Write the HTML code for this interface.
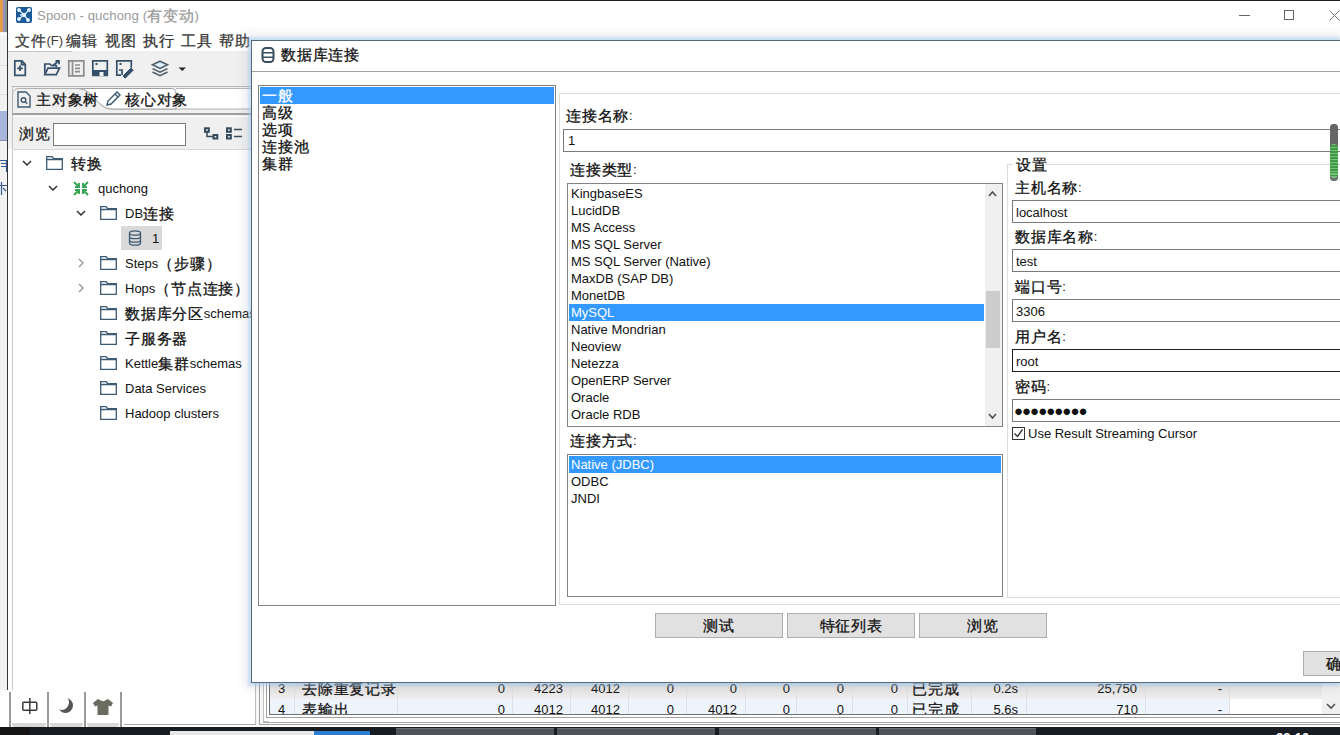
<!DOCTYPE html>
<html><head><meta charset="utf-8">
<style>
*{box-sizing:border-box;margin:0;padding:0}
html,body{width:1340px;height:735px;overflow:hidden;background:#fff;font-family:"Liberation Sans",sans-serif;font-size:13px;color:#000}
.a{position:absolute}
.t{position:absolute;white-space:nowrap;line-height:1}
.c{font-size:1.154em;line-height:0;vertical-align:-1px;letter-spacing:0.75px;-webkit-text-stroke:0.3px currentColor}
</style></head><body>
<!-- background window strip -->
<div class="a" style="left:0;top:0;width:8px;height:735px;background:#f2f2f2"></div>
<div class="a" style="left:0;top:0;width:7px;height:32px;background:linear-gradient(to right,#e6a040 0,#e6a040 2px,#a08cc0 3.5px,#8e9aa0 5px,#7f8f80 7px)"></div>
<div class="a" style="left:0;top:34px;width:7px;height:1px;background:#fff"></div>
<div class="a" style="left:0;top:65px;width:7px;height:1px;background:#dcdcdc"></div>
<div class="a" style="left:0;top:94px;width:7px;height:1px;background:#dcdcdc"></div>
<div class="a" style="left:0;top:111px;width:7px;height:29px;background:#aab5dc"></div>
<div class="a" style="left:0;top:140px;width:7px;height:1px;background:#8890a8"></div>
<svg class="a" style="left:0;top:155px" width="7" height="40" viewBox="0 0 7 40" fill="none" stroke="#3b5a9a" stroke-width="1.2"><path d="M0 5.5h7M1 8.5h6M1 11.5h6M6.5 5v12M0 30.5h7M1.5 27v13M3 33l3 3"/></svg>

<!-- main window -->
<div class="a" id="main" style="left:7px;top:0;width:1333px;height:735px;background:#fff;border-left:1px solid #333;border-top:1px solid #222"></div>
<!-- title bar -->
<svg class="a" style="left:16px;top:7px" width="16" height="16" viewBox="0 0 16 16"><rect width="16" height="16" rx="2" fill="#1a5a96"/><g stroke="#d8ecff" stroke-width="1.3" fill="#fff"><path d="M3 3l5 5M13 3L8 8M3 12l5-4M12 13L8 8M8 8h-4"/><circle cx="3" cy="3" r="1.3"/><circle cx="13" cy="3" r="1.3"/><circle cx="3" cy="12" r="1.3"/><circle cx="12" cy="13" r="1.3"/><circle cx="8" cy="8" r="1.6"/></g></svg>
<div class="t" style="left:37px;top:9px;font-size:13.2px;color:#9a9a9a;letter-spacing:0.1px">Spoon - quchong (<span class="c">有变动</span>)</div>
<!-- window controls -->
<div class="a" style="left:1239px;top:15px;width:11px;height:1px;background:#666"></div>
<div class="a" style="left:1284px;top:10px;width:10px;height:10px;border:1px solid #666"></div>
<svg class="a" style="left:1329px;top:10px" width="11" height="11" viewBox="0 0 11 11" stroke="#777" stroke-width="1"><path d="M0.5 0.5l10 10M10.5 0.5l-10 10"/></svg>

<!-- menu bar -->
<div class="t" style="left:15px;top:34px;color:#3a3a3a"><span class="c">文件</span>(F)</div>
<div class="t" style="left:66px;top:34px;color:#3a3a3a"><span class="c">编辑</span></div>
<div class="t" style="left:105px;top:34px;color:#3a3a3a"><span class="c">视图</span></div>
<div class="t" style="left:143px;top:34px;color:#3a3a3a"><span class="c">执行</span></div>
<div class="t" style="left:181px;top:34px;color:#3a3a3a"><span class="c">工具</span></div>
<div class="t" style="left:219px;top:34px;color:#3a3a3a"><span class="c">帮助</span></div>

<!-- toolbar bg -->
<div class="a" style="left:8px;top:51px;width:243px;height:98px;background:#f0f0f0"></div>


<!-- toolbar icons -->
<div class="a" style="left:8px;top:51px;width:64px;height:1px;background:#c8c8c8"></div>
<svg class="a" style="left:0;top:50px" width="200" height="36" viewBox="0 50 200 36" fill="none" stroke="#34506a" stroke-width="1.7">
 <path d="M14.8 60.8h7l3.5 3.5v11H14.8z M21.5 60.8v3.8h3.8"/><path d="M20 65.5v5.5M17.2 68.3h5.6" stroke-width="1.8"/>
 <path d="M44.8 73.5V64h5l1.5 1.5h5v2" /><path d="M44.8 74.7h11.5l3.2-6.5H48z" /><path d="M52.5 66l6-5M55.5 60.8h3.5v3.5"/>
 <path d="M68.8 60.8h15v15h-15z M72.5 60.8v15 M75 65h5M75 68.3h5M75 71.6h5" stroke="#8c8c8c"/>
 <path d="M92.8 60.8h14.5v14.5H92.8z" /><rect x="93" y="70" width="14" height="6" fill="#34506a" stroke="none"/><rect x="99.5" y="72" width="4" height="4" fill="#f0f0f0" stroke="none"/><rect x="95.5" y="63" width="2" height="2" fill="#34506a" stroke="none"/>
 <path d="M121 75.2h-4.2V60.8h14.5v7" /><rect x="119.5" y="63" width="2" height="2" fill="#34506a" stroke="none"/><path d="M119 70h3v5" /><path d="M123 76l8-8 2.2 2.2-8 8z" fill="#34506a" stroke-width="1"/>
 <path d="M160 61.2l7.5 3.6-7.5 3.6-7.5-3.6z" fill="#dff0fa" stroke="#4d5e6a" stroke-width="1.6"/><path d="M152.5 68.6l7.5 3.6 7.5-3.6 M152.5 72l7.5 3.6 7.5-3.6" stroke="#4d5e6a" stroke-width="1.6"/>
 <path d="M178.5 67.5h7.5l-3.75 3.5z" fill="#222" stroke="none"/>
</svg>
<!-- tab folder frame -->
<div class="a" style="left:12px;top:86px;width:239px;height:63px;background:#f0f0f0;border-left:1px solid #c8c8c8"></div>
<div class="a" style="left:12px;top:86px;width:239px;height:1px;background:#b8b8b8"></div>
<svg class="a" style="left:12px;top:86px" width="239" height="30" viewBox="0 0 239 30">
 <path d="M164 2.5 H239 V23 H164 Z" fill="#fff"/>
 <path d="M0.5 28 V9 Q0.5 2.5 7 2.5 H67 C80 2.5 86 23 99 23 H239" fill="#f0f0f0" stroke="#b0b0b0"/>
 <path d="M67 2.5 H159 Q164 2.5 164 8 V23 H99 C86 23 80 2.5 67 2.5 Z" fill="#fff" stroke="#a0a0a0"/>
 <path d="M164 2.5 H239" stroke="#b8b8b8"/>
 <path d="M0 28 H239" stroke="#a0a0a0" stroke-width="2"/>
</svg>
<!-- tab icons/text -->
<svg class="a" style="left:17px;top:91px" width="14" height="17" viewBox="0 0 14 17" fill="none" stroke="#3d5a73" stroke-width="1.4"><path d="M1 1h8l4 4v11H1z"/><circle cx="6.5" cy="9" r="2.3"/><path d="M8.2 10.7l2 2"/></svg>
<div class="t" style="left:36px;top:93px;color:#111"><span class="c">主对象树</span></div>
<svg class="a" style="left:105px;top:91px" width="16" height="16" viewBox="0 0 16 16" fill="none" stroke="#3d5a73" stroke-width="1.4"><path d="M2 14l1-4 9-9 3 3-9 9z M10 3l3 3"/></svg>
<div class="t" style="left:125px;top:93px;color:#111"><span class="c">核心对象</span></div>

<!-- browse row -->
<div class="t" style="left:19px;top:127px;color:#222"><span class="c">浏览</span></div>
<div class="a" style="left:53px;top:123px;width:133px;height:23px;background:#fff;border:1px solid #7a7a7a"></div>
<div class="a" style="left:13px;top:116px;width:238px;height:1px;background:#fff"></div>
<svg class="a" style="left:200px;top:120px" width="50" height="24" viewBox="200 120 50 24" fill="none" stroke="#34495a" stroke-width="2">
 <rect x="205" y="128.3" width="3.8" height="3.5"/><rect x="213.5" y="135" width="3.8" height="3.5"/><path d="M207 132v4.5h6.5" stroke-width="1.5"/>
 <rect x="227" y="128.3" width="3.8" height="3.5"/><rect x="227" y="135" width="3.8" height="3.5"/><path d="M234 129.5h8M234 136.5h8" stroke-width="1.5"/>
</svg>
<!-- tree area -->
<div class="a" style="left:12px;top:149px;width:244px;height:576px;background:#fff;border-left:1px solid #c8c8c8;border-top:1px solid #d8d8d8;border-right:1px solid #bdbdbd;border-bottom:1px solid #a8a8a8"></div>

<!-- tree -->
<svg class="a" style="left:22px;top:160px" width="10" height="6" viewBox="0 0 10 6" fill="none" stroke="#333" stroke-width="1.5"><path d="M1 1l4 4 4-4"/></svg>
<svg class="a" style="left:46px;top:156px" width="17" height="14" viewBox="0 0 17 14" fill="none" stroke="#3d5a73" stroke-width="1.3"><path d="M0.7 0.7h5.5l1.5 2h8.6v10.6H0.7z M0.7 3.5h16"/></svg>
<div class="t" style="left:71px;top:157px;color:#111"><span class="c">转换</span></div>
<svg class="a" style="left:48px;top:185px" width="10" height="6" viewBox="0 0 10 6" fill="none" stroke="#333" stroke-width="1.5"><path d="M1 1l4 4 4-4"/></svg>
<svg class="a" style="left:73px;top:181px" width="16" height="15" viewBox="0 0 16 15" fill="none" stroke="#3aa655" stroke-width="2"><path d="M1 1l5 5M6 2v4H2 M15 1l-5 5M10 2v4h4 M1 14l5-5M6 13V9H2 M15 14l-5-5M10 13V9h4"/></svg>
<div class="t" style="left:98px;top:182px;color:#111">quchong</div>
<svg class="a" style="left:76px;top:210px" width="10" height="6" viewBox="0 0 10 6" fill="none" stroke="#333" stroke-width="1.5"><path d="M1 1l4 4 4-4"/></svg>
<svg class="a" style="left:100px;top:206px" width="17" height="14" viewBox="0 0 17 14" fill="none" stroke="#3d5a73" stroke-width="1.3"><path d="M0.7 0.7h5.5l1.5 2h8.6v10.6H0.7z M0.7 3.5h16"/></svg>
<div class="t" style="left:125px;top:207px;color:#111">DB<span class="c">连接</span></div>
<div class="a" style="left:121px;top:226px;width:41px;height:24px;background:#d9d9d9"></div>
<svg class="a" style="left:128px;top:230px" width="14" height="16" viewBox="0 0 14 16" fill="none" stroke="#3d5a73" stroke-width="1.3"><ellipse cx="7" cy="3" rx="5.5" ry="2.2"/><path d="M1.5 3v10c0 1.3 2.5 2.2 5.5 2.2s5.5-.9 5.5-2.2V3 M1.5 6.5c0 1.3 2.5 2.2 5.5 2.2s5.5-.9 5.5-2.2 M1.5 10c0 1.3 2.5 2.2 5.5 2.2s5.5-.9 5.5-2.2"/></svg>
<div class="t" style="left:152px;top:232px;color:#111">1</div>
<svg class="a" style="left:78px;top:258px" width="6" height="10" viewBox="0 0 6 10" fill="none" stroke="#999" stroke-width="1.4"><path d="M1 1l4 4-4 4"/></svg>
<svg class="a" style="left:100px;top:256px" width="17" height="14" viewBox="0 0 17 14" fill="none" stroke="#3d5a73" stroke-width="1.3"><path d="M0.7 0.7h5.5l1.5 2h8.6v10.6H0.7z M0.7 3.5h16"/></svg>
<div class="t" style="left:125px;top:257px;color:#111">Steps<span class="c">（步骤）</span></div>
<svg class="a" style="left:78px;top:283px" width="6" height="10" viewBox="0 0 6 10" fill="none" stroke="#999" stroke-width="1.4"><path d="M1 1l4 4-4 4"/></svg>
<svg class="a" style="left:100px;top:281px" width="17" height="14" viewBox="0 0 17 14" fill="none" stroke="#3d5a73" stroke-width="1.3"><path d="M0.7 0.7h5.5l1.5 2h8.6v10.6H0.7z M0.7 3.5h16"/></svg>
<div class="t" style="left:125px;top:282px;color:#111">Hops<span class="c">（节点连接）</span></div>
<svg class="a" style="left:100px;top:306px" width="17" height="14" viewBox="0 0 17 14" fill="none" stroke="#3d5a73" stroke-width="1.3"><path d="M0.7 0.7h5.5l1.5 2h8.6v10.6H0.7z M0.7 3.5h16"/></svg>
<div class="t" style="left:125px;top:307px;color:#111"><span class="c">数据库分区</span>schemas</div>
<svg class="a" style="left:100px;top:331px" width="17" height="14" viewBox="0 0 17 14" fill="none" stroke="#3d5a73" stroke-width="1.3"><path d="M0.7 0.7h5.5l1.5 2h8.6v10.6H0.7z M0.7 3.5h16"/></svg>
<div class="t" style="left:125px;top:332px;color:#111"><span class="c">子服务器</span></div>
<svg class="a" style="left:100px;top:356px" width="17" height="14" viewBox="0 0 17 14" fill="none" stroke="#3d5a73" stroke-width="1.3"><path d="M0.7 0.7h5.5l1.5 2h8.6v10.6H0.7z M0.7 3.5h16"/></svg>
<div class="t" style="left:125px;top:357px;color:#111">Kettle<span class="c">集群</span>schemas</div>
<svg class="a" style="left:100px;top:381px" width="17" height="14" viewBox="0 0 17 14" fill="none" stroke="#3d5a73" stroke-width="1.3"><path d="M0.7 0.7h5.5l1.5 2h8.6v10.6H0.7z M0.7 3.5h16"/></svg>
<div class="t" style="left:125px;top:382px;color:#111">Data Services</div>
<svg class="a" style="left:100px;top:406px" width="17" height="14" viewBox="0 0 17 14" fill="none" stroke="#3d5a73" stroke-width="1.3"><path d="M0.7 0.7h5.5l1.5 2h8.6v10.6H0.7z M0.7 3.5h16"/></svg>
<div class="t" style="left:125px;top:407px;color:#111">Hadoop clusters</div>

<!-- bottom -->
<div class="a" style="left:256px;top:640px;width:1084px;height:87px;background:#f7f7f7"></div>
<div class="a" style="left:259px;top:640px;width:1081px;height:85px;border-left:1px solid #a0a0a0;border-bottom:1px solid #a0a0a0"></div>
<div class="a" style="left:263px;top:640px;width:1077px;height:82px;border-left:1px solid #c0c0c0;border-bottom:1px solid #c0c0c0;background:#fff"></div>
<div class="a" style="left:266px;top:640px;width:1074px;height:78px;border-left:1px solid #a0a0a0;border-bottom:1px solid #a0a0a0"></div>
<div class="a" style="left:269px;top:640px;width:1071px;height:75px;border-left:1px solid #707070;border-bottom:1px solid #707070;background:#fff"></div>
<div class="a" style="left:270px;top:683px;width:1060px;height:16px;background:linear-gradient(#d6dde2,#e6e4e2 25%,#eeeeee)"></div>
<div class="a" style="left:270px;top:699px;width:960px;height:15px;background:#eef4fb"></div>
<div class="a" style="left:294px;top:683px;width:1px;height:31px;background:#e0e0e0"></div>
<div class="a" style="left:397px;top:683px;width:1px;height:31px;background:#e0e0e0"></div>
<div class="a" style="left:512px;top:683px;width:1px;height:31px;background:#e0e0e0"></div>
<div class="a" style="left:570px;top:683px;width:1px;height:31px;background:#e0e0e0"></div>
<div class="a" style="left:628px;top:683px;width:1px;height:31px;background:#e0e0e0"></div>
<div class="a" style="left:686px;top:683px;width:1px;height:31px;background:#e0e0e0"></div>
<div class="a" style="left:745px;top:683px;width:1px;height:31px;background:#e0e0e0"></div>
<div class="a" style="left:796px;top:683px;width:1px;height:31px;background:#e0e0e0"></div>
<div class="a" style="left:852px;top:683px;width:1px;height:31px;background:#e0e0e0"></div>
<div class="a" style="left:907px;top:683px;width:1px;height:31px;background:#e0e0e0"></div>
<div class="a" style="left:971px;top:683px;width:1px;height:31px;background:#e0e0e0"></div>
<div class="a" style="left:1026px;top:683px;width:1px;height:31px;background:#e0e0e0"></div>
<div class="a" style="left:1145px;top:683px;width:1px;height:31px;background:#e0e0e0"></div>
<div class="a" style="left:1229px;top:683px;width:1px;height:31px;background:#e0e0e0"></div>
<div class="a" style="left:1322px;top:683px;width:18px;height:31px;background:#f0f0f0"></div>
<svg class="a" style="left:1326px;top:703px" width="10" height="7" viewBox="0 0 10 7" fill="none" stroke="#505050" stroke-width="1.6"><path d="M1 1l4 4 4-4"/></svg>
<div class="t" style="left:278px;top:682px;color:#111">3</div>
<div class="t" style="left:302px;top:682px;color:#111"><span class="c">去除重复记录</span></div>
<div class="t" style="left:405px;width:100px;text-align:right;top:682px;color:#111">0</div>
<div class="t" style="left:463px;width:100px;text-align:right;top:682px;color:#111">4223</div>
<div class="t" style="left:520px;width:100px;text-align:right;top:682px;color:#111">4012</div>
<div class="t" style="left:574px;width:100px;text-align:right;top:682px;color:#111">0</div>
<div class="t" style="left:637px;width:100px;text-align:right;top:682px;color:#111">0</div>
<div class="t" style="left:690px;width:100px;text-align:right;top:682px;color:#111">0</div>
<div class="t" style="left:744px;width:100px;text-align:right;top:682px;color:#111">0</div>
<div class="t" style="left:798px;width:100px;text-align:right;top:682px;color:#111">0</div>
<div class="t" style="left:912px;top:682px;color:#111"><span class="c">已完成</span></div>
<div class="t" style="left:918px;width:100px;text-align:right;top:682px;color:#111">0.2s</div>
<div class="t" style="left:1037px;width:100px;text-align:right;top:682px;color:#111">25,750</div>
<div class="t" style="left:1122px;width:100px;text-align:right;top:682px;color:#111">-</div>
<div class="t" style="left:278px;top:703px;color:#111">4</div>
<div class="t" style="left:302px;top:703px;color:#111"><span class="c">表输出</span></div>
<div class="t" style="left:405px;width:100px;text-align:right;top:703px;color:#111">0</div>
<div class="t" style="left:463px;width:100px;text-align:right;top:703px;color:#111">4012</div>
<div class="t" style="left:520px;width:100px;text-align:right;top:703px;color:#111">4012</div>
<div class="t" style="left:574px;width:100px;text-align:right;top:703px;color:#111">0</div>
<div class="t" style="left:637px;width:100px;text-align:right;top:703px;color:#111">4012</div>
<div class="t" style="left:690px;width:100px;text-align:right;top:703px;color:#111">0</div>
<div class="t" style="left:744px;width:100px;text-align:right;top:703px;color:#111">0</div>
<div class="t" style="left:798px;width:100px;text-align:right;top:703px;color:#111">0</div>
<div class="t" style="left:912px;top:703px;color:#111"><span class="c">已完成</span></div>
<div class="t" style="left:918px;width:100px;text-align:right;top:703px;color:#111">5.6s</div>
<div class="t" style="left:1038px;width:100px;text-align:right;top:703px;color:#111">710</div>
<div class="t" style="left:1122px;width:100px;text-align:right;top:703px;color:#111">-</div>
<div class="a" style="left:269px;top:714px;width:1071px;height:13px;background:#fff;border-top:1px solid #707070"></div>
<div class="a" style="left:266px;top:717px;width:1074px;height:1px;background:#a0a0a0"></div>
<div class="a" style="left:263px;top:722px;width:1077px;height:1px;background:#a8a8a8"></div>
<div class="a" style="left:259px;top:724px;width:1081px;height:1px;background:#a0a0a0"></div>
<div class="a" style="left:0px;top:690px;width:124px;height:37px;background:#fff"></div>
<div class="a" style="left:9px;top:692px;width:2px;height:35px;background:#9a9a9a"></div>
<div class="a" style="left:47px;top:692px;width:2px;height:35px;background:#9a9a9a"></div>
<div class="a" style="left:84px;top:692px;width:2px;height:35px;background:#9a9a9a"></div>
<div class="a" style="left:120px;top:692px;width:2px;height:35px;background:#9a9a9a"></div>
<div class="a" style="left:12px;top:723px;width:34px;height:4px;background:#d8d8d8;border-radius:0 0 3px 3px"></div>
<div class="a" style="left:50px;top:723px;width:33px;height:4px;background:#d8d8d8;border-radius:0 0 3px 3px"></div>
<div class="a" style="left:87px;top:723px;width:32px;height:4px;background:#d8d8d8;border-radius:0 0 3px 3px"></div>
<svg class="a" style="left:20px;top:696px" width="20" height="20" viewBox="0 0 20 20" fill="none" stroke="#3a3a3a" stroke-width="1.5"><rect x="2.8" y="6.2" width="14" height="8" rx="1"/><path d="M9.8 2v16"/></svg>
<svg class="a" style="left:56px;top:696px" width="18" height="18" viewBox="0 0 18 18"><defs><mask id="mm"><rect width="18" height="18" fill="#fff"/><circle cx="5.5" cy="6.5" r="7.5" fill="#000"/></mask></defs><circle cx="9.5" cy="9.5" r="7.5" fill="#555" mask="url(#mm)"/></svg>
<svg class="a" style="left:92px;top:698px" width="22" height="18" viewBox="0 0 22 18"><path d="M6 1 L9 2.5 Q11 4 13 2.5 L16 1 L21 5 L19 8.5 L16.5 7.5 V17 H5.5 V7.5 L3 8.5 L1 5z" fill="#6b6b60"/></svg>
<div class="a" style="left:0;top:727px;width:1340px;height:8px;background:#171d23"></div>
<div class="a" style="left:0;top:727px;width:30px;height:8px;background:#151515"></div>
<div class="a" style="left:170px;top:731px;width:144px;height:4px;background:#e8e8e8"></div>
<div class="a" style="left:314px;top:731px;width:56px;height:4px;background:#2a7fd4"></div>
<div class="a" style="left:396px;top:728px;width:158px;height:7px;background:#4e5359;border-top:1px solid #6a6e74"></div>
<div class="a" style="left:557px;top:728px;width:158px;height:7px;background:#4e5359;border-top:1px solid #6a6e74"></div>
<div class="a" style="left:719px;top:728px;width:157px;height:7px;background:#4e5359;border-top:1px solid #6a6e74"></div>
<div class="a" style="left:879px;top:728px;width:157px;height:7px;background:#4e5359;border-top:1px solid #6a6e74"></div>
<div class="t" style="left:1276px;top:731px;color:#fff;font-size:13px;font-weight:bold">22:10</div>

<!-- dialog -->
<div class="a" style="left:242px;top:31px;width:1098px;height:660px;border-radius:6px 0 0 6px;background:rgba(120,120,140,0.09);filter:blur(3px)"></div>
<div class="a" style="left:248px;top:37px;width:1092px;height:649px;background:rgba(150,200,240,0.45);filter:blur(1px)"></div>
<div class="a" style="left:251px;top:40px;width:1089px;height:643px;background:#fff;border:1px solid #56687a;border-right:none"></div>
<svg class="a" style="left:261px;top:47px" width="14" height="16" viewBox="0 0 14 16" fill="none" stroke="#3a4d5a" stroke-width="2"><rect x="1.5" y="1" width="11" height="14" rx="3.5"/><path d="M1.5 5.8h11M1.5 10.2h11" stroke-width="1.6"/></svg>
<div class="t" style="left:281px;top:48px;color:#111"><span class="c">数据库连接</span></div>
<div class="a" style="left:252px;top:71px;width:1088px;height:1px;background:#a0a0a0"></div>
<div class="a" style="left:258px;top:85px;width:298px;height:521px;border:1px solid #828282"></div>
<div class="a" style="left:260px;top:87px;width:294px;height:17px;background:#3399ff"></div>
<div class="t" style="left:262px;top:89px;color:#fff"><span class="c">一般</span></div>
<div class="t" style="left:262px;top:106px;color:#111"><span class="c">高级</span></div>
<div class="t" style="left:262px;top:123px;color:#111"><span class="c">选项</span></div>
<div class="t" style="left:262px;top:140px;color:#111"><span class="c">连接池</span></div>
<div class="t" style="left:262px;top:157px;color:#111"><span class="c">集群</span></div>
<div class="a" style="left:559px;top:93px;width:781px;height:512px;border:1px solid #dcdcdc;border-right:none"></div>
<div class="t" style="left:566px;top:109px;color:#111"><span class="c">连接名称</span>:</div>
<div class="a" style="left:563px;top:129px;width:777px;height:23px;border:1px solid #7a7a7a;border-right:none;background:#fff"></div>
<div class="t" style="left:568px;top:134px;color:#111">1</div>
<div class="t" style="left:570px;top:163px;color:#111"><span class="c">连接类型</span>:</div>
<div class="a" style="left:567px;top:183px;width:436px;height:244px;border:1px solid #828282;background:#fff"></div>
<div class="a" style="left:985px;top:184px;width:17px;height:242px;background:#f0f0f0"></div>
<div class="a" style="left:986px;top:291px;width:14px;height:57px;background:#cdcdcd"></div>
<svg class="a" style="left:988px;top:190px" width="9" height="7" viewBox="0 0 9 7" fill="none" stroke="#505050" stroke-width="1.6"><path d="M1 6l3.5-4 3.5 4"/></svg>
<svg class="a" style="left:988px;top:413px" width="9" height="7" viewBox="0 0 9 7" fill="none" stroke="#505050" stroke-width="1.6"><path d="M1 1l3.5 4 3.5-4"/></svg>
<div class="a" style="left:569px;top:304px;width:415px;height:17px;background:#3399ff"></div>
<div class="t" style="left:571px;top:187px;color:#111">KingbaseES</div>
<div class="t" style="left:571px;top:204px;color:#111">LucidDB</div>
<div class="t" style="left:571px;top:221px;color:#111">MS Access</div>
<div class="t" style="left:571px;top:238px;color:#111">MS SQL Server</div>
<div class="t" style="left:571px;top:255px;color:#111">MS SQL Server (Native)</div>
<div class="t" style="left:571px;top:272px;color:#111">MaxDB (SAP DB)</div>
<div class="t" style="left:571px;top:289px;color:#111">MonetDB</div>
<div class="t" style="left:571px;top:306px;color:#fff">MySQL</div>
<div class="t" style="left:571px;top:323px;color:#111">Native Mondrian</div>
<div class="t" style="left:571px;top:340px;color:#111">Neoview</div>
<div class="t" style="left:571px;top:357px;color:#111">Netezza</div>
<div class="t" style="left:571px;top:374px;color:#111">OpenERP Server</div>
<div class="t" style="left:571px;top:391px;color:#111">Oracle</div>
<div class="t" style="left:571px;top:408px;color:#111">Oracle RDB</div>
<div class="t" style="left:570px;top:434px;color:#111"><span class="c">连接方式</span>:</div>
<div class="a" style="left:567px;top:454px;width:436px;height:143px;border:1px solid #828282;background:#fff"></div>
<div class="a" style="left:569px;top:456px;width:432px;height:17px;background:#3399ff"></div>
<div class="t" style="left:571px;top:458px;color:#fff">Native (JDBC)</div>
<div class="t" style="left:571px;top:475px;color:#111">ODBC</div>
<div class="t" style="left:571px;top:492px;color:#111">JNDI</div>
<div class="a" style="left:1007px;top:164px;width:333px;height:434px;border:1px solid #dcdcdc;border-right:none"></div>
<div class="a" style="left:1013px;top:157px;width:32px;height:14px;background:#fff"></div>
<div class="t" style="left:1016px;top:158px;color:#111"><span class="c">设置</span></div>
<div class="t" style="left:1015px;top:181px;color:#111"><span class="c">主机名称</span>:</div>
<div class="a" style="left:1012px;top:200px;width:328px;height:23px;border:1px solid #7a7a7a;border-right:none;background:#fff"></div>
<div class="t" style="left:1016px;top:206px;color:#111">localhost</div>
<div class="t" style="left:1015px;top:230px;color:#111"><span class="c">数据库名称</span>:</div>
<div class="a" style="left:1012px;top:249px;width:328px;height:23px;border:1px solid #7a7a7a;border-right:none;background:#fff"></div>
<div class="t" style="left:1016px;top:255px;color:#111">test</div>
<div class="t" style="left:1015px;top:280px;color:#111"><span class="c">端口号</span>:</div>
<div class="a" style="left:1012px;top:299px;width:328px;height:23px;border:1px solid #7a7a7a;border-right:none;background:#fff"></div>
<div class="t" style="left:1016px;top:305px;color:#111">3306</div>
<div class="t" style="left:1015px;top:330px;color:#111"><span class="c">用户名</span>:</div>
<div class="a" style="left:1012px;top:349px;width:328px;height:23px;border:1px solid #1e1e1e;border-right:none;background:#fff"></div>
<div class="t" style="left:1016px;top:355px;color:#111">root</div>
<div class="t" style="left:1015px;top:380px;color:#111"><span class="c">密码</span>:</div>
<div class="a" style="left:1012px;top:399px;width:328px;height:23px;border:1px solid #7a7a7a;border-right:none;background:#fff"></div>
<div class="t" style="left:1014px;top:403px;color:#111;font-size:15px;letter-spacing:-1px">●●●●●●●●●</div>
<div class="a" style="left:1012px;top:427px;width:13px;height:13px;border:1px solid #333;background:#fff"></div>
<svg class="a" style="left:1013px;top:428px" width="11" height="11" viewBox="0 0 11 11" fill="none" stroke="#333" stroke-width="1.4"><path d="M1.5 5.5l3 3 5-7"/></svg>
<div class="t" style="left:1028px;top:427px;color:#111">Use Result Streaming Cursor</div>
<div class="a" style="left:1330px;top:124px;width:8px;height:57px;border-radius:4px;background:repeating-linear-gradient(to bottom,#3f9a45 0,#3f9a45 1.5px,#78c078 1.5px,#78c078 3px);box-shadow:inset 0 20px 0 #666,inset 0 -3px 0 #707070"></div>
<div class="a" style="left:655px;top:613px;width:128px;height:25px;background:#e1e1e1;border:1px solid #adadad;text-align:center;line-height:23px;color:#111"><span class="c">测试</span></div>
<div class="a" style="left:787px;top:613px;width:128px;height:25px;background:#e1e1e1;border:1px solid #adadad;text-align:center;line-height:23px;color:#111"><span class="c">特征列表</span></div>
<div class="a" style="left:919px;top:613px;width:128px;height:25px;background:#e1e1e1;border:1px solid #adadad;text-align:center;line-height:23px;color:#111"><span class="c">浏览</span></div>
<div class="a" style="left:1303px;top:651px;width:60px;height:25px;background:#e1e1e1;border:1px solid #adadad;line-height:23px;color:#111;padding-left:22px"><span class="c">确</span></div>
</body></html>
